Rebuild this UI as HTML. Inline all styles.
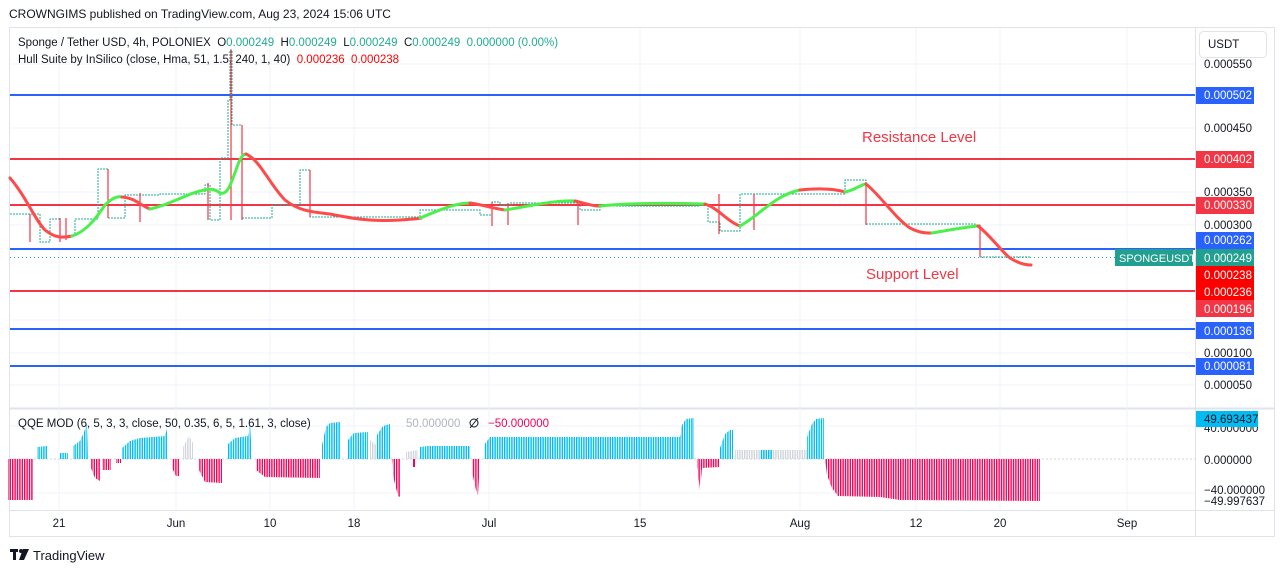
<!DOCTYPE html>
<html><head><meta charset="utf-8"><style>
body{margin:0;background:#fff;font-family:"Liberation Sans",sans-serif;}
svg{display:block}
</style></head><body>
<svg width="1281" height="573" xmlns="http://www.w3.org/2000/svg" font-family="Liberation Sans, sans-serif">
<defs>
<pattern id="pb" width="2.4" height="10" patternUnits="userSpaceOnUse"><rect width="1.4" height="10" fill="#00bcf2"/></pattern>
<pattern id="pp" width="2.4" height="10" patternUnits="userSpaceOnUse"><rect width="1.4" height="10" fill="#f50057"/></pattern>
<pattern id="pg" width="2.4" height="10" patternUnits="userSpaceOnUse"><rect width="1.4" height="10" fill="#d1d4dc"/></pattern>
</defs>
<rect width="1281" height="573" fill="#fff"/>
<text x="9" y="18" font-size="12" fill="#131722">CROWNGIMS published on TradingView.com, Aug 23, 2024 15:06 UTC</text>
<rect x="9.5" y="27.5" width="1265" height="509" fill="none" stroke="#e0e3eb"/>
<line x1="1195.5" y1="28" x2="1195.5" y2="537" stroke="#e0e3eb"/>
<line x1="10" y1="408.5" x2="1275" y2="408.5" stroke="#e0e3eb" stroke-width="2"/>
<line x1="10" y1="510.5" x2="1275" y2="510.5" stroke="#e0e3eb"/>
<g stroke="#f0f3fa" stroke-width="1">
<line x1="59" y1="28" x2="59" y2="510"/><line x1="176" y1="28" x2="176" y2="510"/><line x1="270" y1="28" x2="270" y2="510"/><line x1="354" y1="28" x2="354" y2="510"/><line x1="489" y1="28" x2="489" y2="510"/><line x1="640" y1="28" x2="640" y2="510"/><line x1="800" y1="28" x2="800" y2="510"/><line x1="916" y1="28" x2="916" y2="510"/><line x1="1000" y1="28" x2="1000" y2="510"/><line x1="1127" y1="28" x2="1127" y2="510"/>
<line x1="10" y1="64" x2="1195" y2="64"/><line x1="10" y1="128" x2="1195" y2="128"/><line x1="10" y1="192" x2="1195" y2="192"/><line x1="10" y1="225" x2="1195" y2="225"/><line x1="10" y1="320" x2="1195" y2="320"/><line x1="10" y1="353" x2="1195" y2="353"/><line x1="10" y1="385" x2="1195" y2="385"/>
<line x1="10" y1="426" x2="1195" y2="426"/><line x1="10" y1="493" x2="1195" y2="493"/>
</g>
<line x1="10" y1="459" x2="1195" y2="459" stroke="#d1d4dc" stroke-dasharray="2 2"/>
<text x="18" y="46" font-size="11.5" fill="#131722" xml:space="preserve">Sponge / Tether USD, 4h, POLONIEX  O<tspan fill="#22ab94">0.000249</tspan>  H<tspan fill="#22ab94">0.000249</tspan>  L<tspan fill="#22ab94">0.000249</tspan>  C<tspan fill="#22ab94">0.000249</tspan>  <tspan fill="#22ab94">0.000000 (0.00%)</tspan></text>
<text x="18" y="63" font-size="11.5" fill="#131722" xml:space="preserve">Hull Suite by InSilico (close, Hma, 51, 1.5, 240, 1, 40)  <tspan fill="#ff0000">0.000236  0.000238</tspan></text>
<g stroke-width="2">
<line x1="10" y1="95" x2="1195" y2="95" stroke="#2962ff"/>
<line x1="10" y1="159" x2="1195" y2="159" stroke="#f23645"/>
<line x1="10" y1="205" x2="1195" y2="205" stroke="#f23645"/>
<line x1="10" y1="249" x2="1195" y2="249" stroke="#2962ff"/>
<line x1="10" y1="291" x2="1195" y2="291" stroke="#f23645"/>
<line x1="10" y1="329" x2="1195" y2="329" stroke="#2962ff"/>
<line x1="10" y1="366" x2="1195" y2="366" stroke="#2962ff"/>
</g>
<line x1="10" y1="257.5" x2="1115" y2="257.5" stroke="#22ab94" stroke-dasharray="1 3"/>
<path d="M10 214 H40 V242 H50 V219 H60 V236 H75 V219 H90 V219 H98 V169 H108 V218 H125 V195 H140 V195 H160 V194 H185 V194 H205 V185 H210 V220 H220 V158 H228 V100 H230 V50 H232 V125 H242 V218 H272 V205 H285 V205 H300 V170 H310 V217 H350 V217 H420 V210 H480 V215 H492 V202 H500 V205 H510 V203 H570 V203 H580 V210 H600 V206 H700 V205 H708 V222 H720 V231 H740 V194 H755 V194 H845 V180 H866 V224 H975 V225 H980 V257 H1030" fill="none" stroke="#22ab94" stroke-width="1" stroke-dasharray="2 1"/>
<g stroke="#f23645" stroke-width="1.2">
<line x1="30" y1="214" x2="30" y2="242"/><line x1="60" y1="218" x2="60" y2="242"/><line x1="66" y1="218" x2="66" y2="240"/><line x1="108" y1="169" x2="108" y2="218"/><line x1="140" y1="193" x2="140" y2="222"/><line x1="208" y1="183" x2="208" y2="220"/><line x1="231" y1="50" x2="231" y2="220"/><line x1="242" y1="125" x2="242" y2="220"/><line x1="310" y1="170" x2="310" y2="217"/><line x1="492" y1="202" x2="492" y2="226"/><line x1="508" y1="203" x2="508" y2="225"/><line x1="578" y1="201" x2="578" y2="225"/><line x1="719" y1="194" x2="719" y2="234"/><line x1="754" y1="194" x2="754" y2="230"/><line x1="866" y1="184" x2="866" y2="225"/><line x1="980" y1="225" x2="980" y2="257"/>
</g>
<g fill="none" stroke-width="3" stroke-linecap="round">
<path d="M10 178 C25 195 35 220 45 230 C55 238 62 238 72 236" stroke="#ff4a4a"/>
<path d="M72 236 C85 232 95 220 105 205 C112 198 118 196 122 197" stroke="#4cf04c"/>
<path d="M122 197 C135 198 140 205 150 209" stroke="#ff4a4a"/>
<path d="M150 209 C170 205 190 192 205 190 C212 188 216 190 220 193" stroke="#4cf04c"/>
<path d="M220 193 C228 196 232 180 236 170 C240 158 243 154 246 154" stroke="#4cf04c"/>
<path d="M246 154 C260 160 270 185 285 200 C300 212 315 212 330 214 C350 218 370 222 400 220 C415 219 425 218 420 218" stroke="#ff4a4a"/>
<path d="M420 218 C440 210 455 203 470 203" stroke="#4cf04c"/>
<path d="M470 203 C480 204 490 208 505 210" stroke="#ff4a4a"/>
<path d="M505 210 C530 206 555 200 575 201" stroke="#4cf04c"/>
<path d="M575 201 C585 203 590 206 600 206" stroke="#ff4a4a"/>
<path d="M600 206 C630 203 670 203 705 204" stroke="#4cf04c"/>
<path d="M705 204 C718 208 728 222 740 226" stroke="#ff4a4a"/>
<path d="M740 226 C760 215 775 195 800 190" stroke="#4cf04c"/>
<path d="M800 190 C820 188 835 189 845 192" stroke="#ff4a4a"/>
<path d="M845 192 C855 190 860 185 866 184" stroke="#4cf04c"/>
<path d="M866 184 C880 195 895 218 910 228 C920 233 925 233 932 233" stroke="#ff4a4a"/>
<path d="M932 233 C950 230 965 227 978 226" stroke="#4cf04c"/>
<path d="M978 226 C990 235 1000 250 1010 258 C1018 263 1025 265 1031 265" stroke="#ff4a4a"/>
</g>
<text x="862" y="142" font-size="15" fill="#f23645">Resistance Level</text>
<text x="866" y="279" font-size="15" fill="#f23645">Support Level</text>
<rect x="1199.5" y="31.5" width="67" height="26" rx="4" fill="#fff" stroke="#e0e3eb"/>
<text x="1208" y="48" font-size="11.5" fill="#131722">USDT</text>
<g font-size="11.5" fill="#131722">
<text x="1204" y="68">0.000550</text><text x="1204" y="132">0.000450</text><text x="1204" y="196">0.000350</text><text x="1204" y="229">0.000300</text><text x="1204" y="357">0.000100</text><text x="1204" y="389">0.000050</text>
</g>
<rect x="1196" y="87" width="58" height="17" fill="#2962ff"/>
<rect x="1196" y="151" width="58" height="17" fill="#f23645"/>
<rect x="1196" y="197" width="58" height="17" fill="#f23645"/>
<rect x="1196" y="232" width="58" height="17" fill="#2962ff"/>
<rect x="1115" y="249" width="78" height="17" fill="#22a08f"/>
<rect x="1196" y="249" width="58" height="17" fill="#22a08f"/>
<rect x="1196" y="266" width="58" height="34" fill="#ff0000"/>
<rect x="1196" y="300" width="58" height="17" fill="#f23645"/>
<rect x="1196" y="322" width="58" height="17" fill="#2962ff"/>
<rect x="1196" y="358" width="58" height="17" fill="#2962ff"/>
<g font-size="11.5" fill="#fff">
<text x="1204" y="99">0.000502</text><text x="1204" y="163">0.000402</text><text x="1204" y="209">0.000330</text><text x="1204" y="244">0.000262</text>
<text x="1119" y="262" font-size="11">SPONGEUSDT</text><text x="1204" y="262">0.000249</text>
<text x="1204" y="279">0.000238</text><text x="1204" y="296">0.000236</text><text x="1204" y="313">0.000196</text><text x="1204" y="335">0.000136</text><text x="1204" y="370">0.000081</text>
</g>
<g>
<rect x="8" y="459" width="25" height="41" fill="url(#pp)"/>
<polygon points="37,459 37,447 47,446 47,459" fill="url(#pb)"/>
<rect x="60" y="453" width="8" height="6" fill="url(#pb)"/>
<polygon points="73,459 73,446 80,441 84,432 87,424 88,459" fill="url(#pb)"/>
<polygon points="91,459 91,468 95,478 100,481 100,459" fill="url(#pp)"/>
<rect x="102" y="459" width="9" height="11" fill="url(#pp)"/>
<rect x="116" y="459" width="5" height="4" fill="url(#pp)"/>
<polygon points="122,459 122,448 130,441 140,438 165,436 168,425 168,459" fill="url(#pb)"/>
<polygon points="172,459 172,468 176,476 180,476 180,459" fill="url(#pp)"/>
<polygon points="183,459 183,447 189,436 193,443 193,459" fill="url(#pg)"/>
<polygon points="199,459 199,470 205,482 222,483 222,459" fill="url(#pp)"/>
<polygon points="227,459 227,445 235,438 248,436 250,424 252,459" fill="url(#pb)"/>
<polygon points="256,459 256,470 265,477 320,478 320,459" fill="url(#pp)"/>
<polygon points="322,459 322,445 326,427 330,423 340,422 340,459" fill="url(#pb)"/>
<polygon points="348,459 348,440 354,433 368,432 368,459" fill="url(#pb)"/>
<polygon points="370,459 370,440 376,445 380,459" fill="url(#pg)"/>
<polygon points="377,459 377,435 383,426 390,424 390,459" fill="url(#pb)"/>
<polygon points="392,459 394,480 398,496 400,497 400,459" fill="url(#pp)"/>
<rect x="413" y="459" width="2" height="8" fill="#f50057"/>
<polygon points="406,459 406,452 418,450 418,459" fill="url(#pg)"/>
<polygon points="420,459 420,447 428,446 470,446 470,459" fill="url(#pb)"/>
<polygon points="472,459 472,472 476,490 478,495 480,459" fill="url(#pp)"/>
<polygon points="484,459 484,445 490,437 680,437 682,425 686,419 694,418 694,459" fill="url(#pb)"/>
<polygon points="697,459 697,467 700,490 702,468 720,467 720,459" fill="url(#pp)"/>
<polygon points="720,459 720,448 725,434 730,430 733,430 733,459" fill="url(#pb)"/>
<polygon points="735,459 735,450 740,450 807,450 807,459" fill="url(#pg)"/>
<rect x="760" y="450" width="12" height="9" fill="url(#pb)"/>
<polygon points="807,459 807,437 812,424 816,419 824,418 824,459" fill="url(#pb)"/>
<polygon points="825,459 827,475 832,488 838,496 880,497 900,500 1040,501 1040,459" fill="url(#pp)"/>
</g>
<text x="18" y="427" font-size="11.5" fill="#131722">QQE MOD (6, 5, 3, 3, close, 50, 0.35, 6, 5, 1.61, 3, close)</text>
<text x="406" y="427" font-size="11.5" fill="#b2b5be">50.000000</text>
<circle cx="474" cy="423" r="4" fill="none" stroke="#131722" stroke-width="1"/><line x1="470" y1="428" x2="478" y2="418" stroke="#131722"/>
<text x="488" y="427" font-size="11.5" fill="#f50057">−50.000000</text>
<text x="1204" y="432" font-size="11.5" fill="#131722">40.000000</text>
<rect x="1196" y="411" width="62" height="16" fill="#00bcf2"/>
<text x="1204" y="423" font-size="11.5" fill="#131722">49.693437</text>
<text x="1204" y="464" font-size="11.5" fill="#131722">0.000000</text>
<text x="1204" y="494" font-size="11.5" fill="#131722">−40.000000</text>
<rect x="1196" y="494" width="70" height="14" fill="#fff"/>
<text x="1204" y="505" font-size="11.5" fill="#131722">−49.997637</text>
<g font-size="11.5" fill="#131722" text-anchor="middle">
<text x="59" y="527">21</text><text x="176" y="527">Jun</text><text x="270" y="527">10</text><text x="354" y="527">18</text><text x="489" y="527">Jul</text><text x="640" y="527">15</text><text x="800" y="527">Aug</text><text x="916" y="527">12</text><text x="1000" y="527">20</text><text x="1127" y="527">Sep</text>
</g>
<g fill="#131722">
<rect x="10" y="549" width="8" height="3"/><rect x="13" y="549" width="3" height="11"/>
<circle cx="21" cy="551" r="2"/><polygon points="23,549 29,549 24,560 19,560"/>
</g>
<text x="33" y="560" font-size="13" fill="#131722">TradingView</text>
</svg>
</body></html>
